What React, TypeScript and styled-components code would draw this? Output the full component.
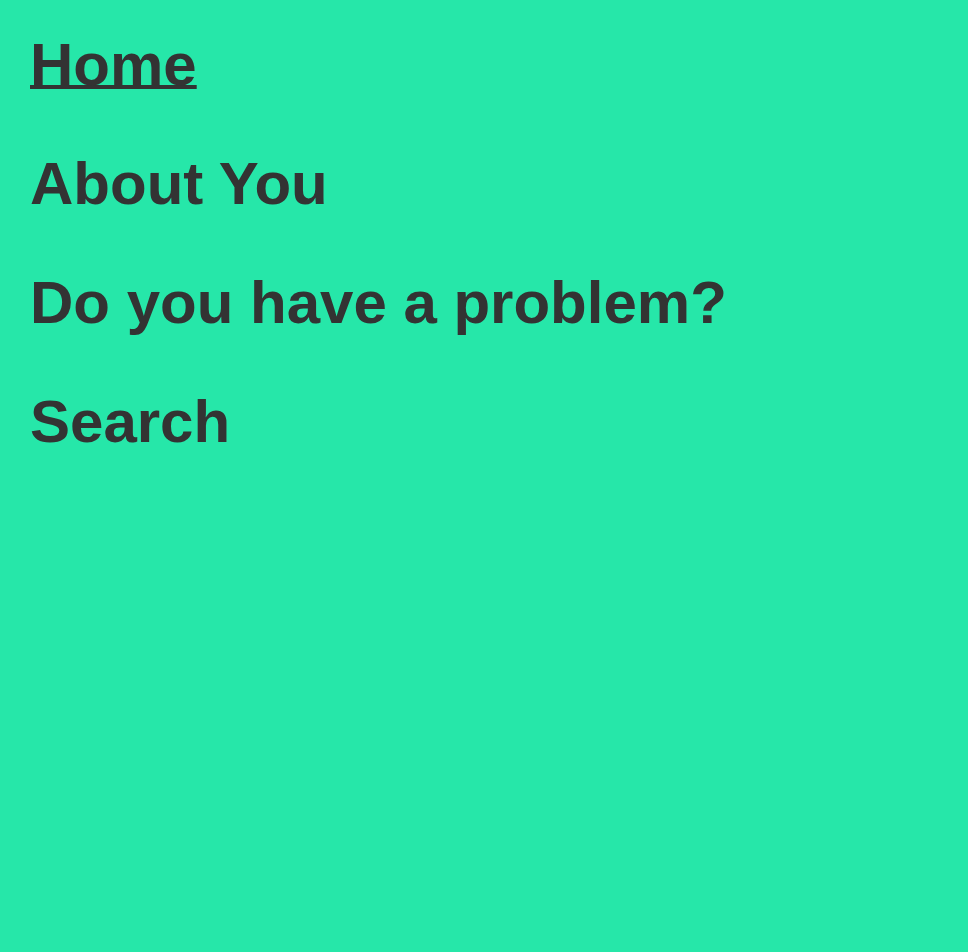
import React from "react";
import styled, { createGlobalStyle } from "styled-components";

const GlobalStyle = createGlobalStyle`
  html, body {
    margin: 0;
    padding: 0;
    background: #26e7a9;
  }
  body {
    font-family: "Liberation Sans", Arial, Helvetica, sans-serif;
  }
`;

const Page = styled.div`
  min-height: 952px;
  box-sizing: border-box;
  padding: 30px;
  background: #26e7a9;
`;

const NavList = styled.nav`
  display: flex;
  flex-direction: column;
  align-items: flex-start;
  gap: 50px;
`;

const NavLink = styled.a<{ $active?: boolean }>`
  display: block;
  font-family: "Liberation Sans", Arial, Helvetica, sans-serif;
  font-weight: 700;
  font-size: 60px;
  line-height: 69px;
  color: #333333;
  text-decoration: ${(p) => (p.$active ? "underline" : "none")};
  text-decoration-thickness: 4px;
  text-underline-offset: 0px;
  text-decoration-skip-ink: none;
  cursor: pointer;
`;

const items = ["Home", "About You", "Do you have a problem?", "Search"];

export default function App() {
  return (
    <>
      <GlobalStyle />
      <Page>
        <NavList>
          {items.map((label, i) => (
            <NavLink key={label} $active={i === 0}>
              {label}
            </NavLink>
          ))}
        </NavList>
      </Page>
    </>
  );
}
